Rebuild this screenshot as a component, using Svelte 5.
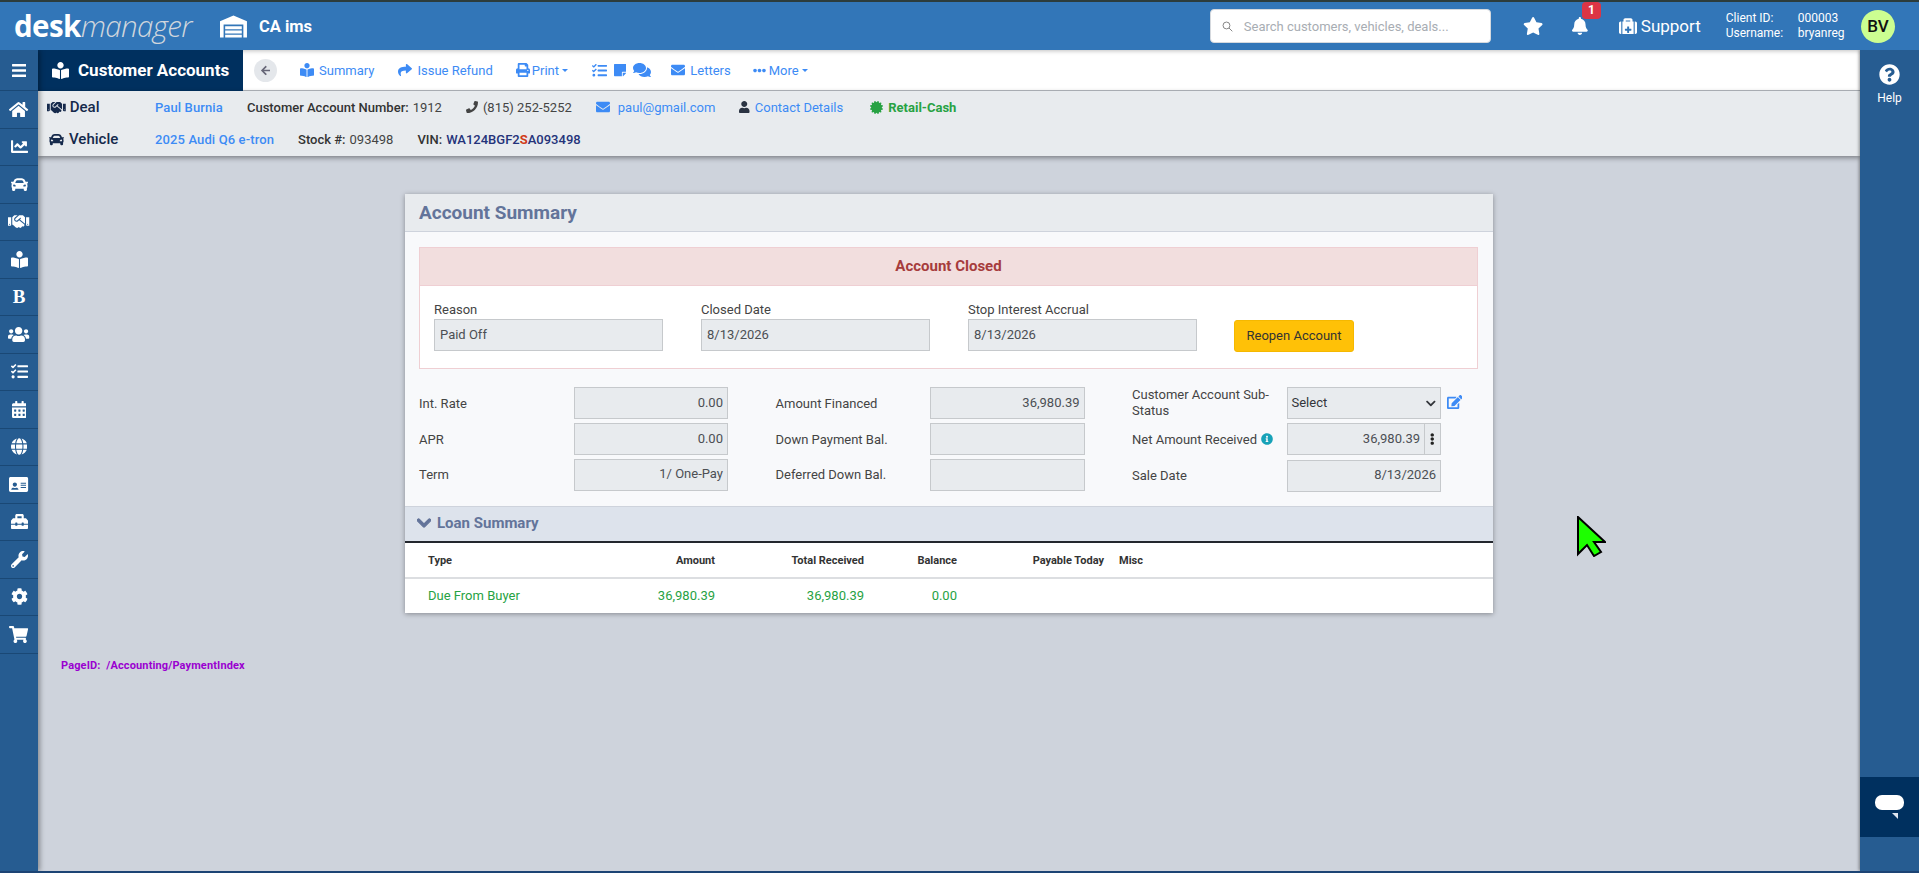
<script lang="ts">
  const icons: Record<string, [number, string]> = {
    bars: [448, "M16 132h416c8.837 0 16-7.163 16-16V76c0-8.837-7.163-16-16-16H16C7.163 60 0 67.163 0 76v40c0 8.837 7.163 16 16 16zm0 160h416c8.837 0 16-7.163 16-16v-40c0-8.837-7.163-16-16-16H16c-8.837 0-16 7.163-16 16v40c0 8.837 7.163 16 16 16zm0 160h416c8.837 0 16-7.163 16-16v-40c0-8.837-7.163-16-16-16H16c-8.837 0-16 7.163-16 16v40c0 8.837 7.163 16 16 16z"],
    star: [576, "M259.3 17.8L194 150.2 47.9 171.5c-26.2 3.8-36.7 36.1-17.7 54.6l105.7 103-25 145.5c-4.5 26.3 23.2 46 46.4 33.7L288 439.6l130.7 68.7c23.2 12.2 50.9-7.4 46.4-33.7l-25-145.5 105.7-103c19-18.5 8.5-50.8-17.7-54.6L382 150.2 316.7 17.8c-11.7-23.6-45.6-23.9-57.4 0z"],
    bell: [448, "M224 512c35.32 0 63.97-28.65 63.97-64H160.03c0 35.35 28.65 64 63.97 64zm215.39-149.71c-19.32-20.76-55.47-51.99-55.47-154.29 0-77.7-54.48-139.9-127.94-155.16V32c0-17.67-14.32-32-31.98-32s-31.98 14.33-31.98 32v20.84C118.56 68.1 64.08 130.3 64.08 208c0 102.3-36.15 133.53-55.47 154.29-6 6.45-8.66 14.16-8.61 21.71.11 16.4 12.98 32 32.1 32h383.8c19.12 0 32-15.6 32.1-32 .05-7.55-2.61-15.27-8.61-21.71z"],
    phone: [512, "M493.4 24.6l-104-24c-11.3-2.6-22.9 3.3-27.5 13.9l-48 112c-4.2 9.8-1.4 21.3 6.9 28l60.6 49.6c-36 76.7-98.9 140.5-177.2 177.2l-49.6-60.6c-6.8-8.3-18.2-11.1-28-6.9l-112 48C3.9 366.5-2 378.1.6 389.4l24 104C27.1 504.2 36.7 512 48 512c256.1 0 464-207.5 464-464 0-11.2-7.7-20.9-18.6-23.4z"],
    envelope: [512, "M502.3 190.8c3.9-3.1 9.7-.2 9.7 4.7V400c0 26.5-21.5 48-48 48H48c-26.5 0-48-21.5-48-48V195.6c0-5 5.7-7.8 9.7-4.7 22.4 17.4 52.1 39.5 154.1 113.6 21.1 15.4 56.7 47.8 92.2 47.6 35.7.3 72-32.8 92.3-47.6 102-74.1 131.6-96.3 154-113.7zM256 320c23.2.4 56.6-29.2 73.4-41.4 132.7-96.3 142.8-104.7 173.4-128.7 5.8-4.5 9.2-11.5 9.2-18.9v-19c0-26.5-21.5-48-48-48H48C21.5 64 0 85.5 0 112v19c0 7.4 3.4 14.3 9.2 18.9 30.6 23.9 40.7 32.4 173.4 128.7 16.8 12.2 50.2 41.8 73.4 41.4z"],
    user: [448, "M224 256c70.7 0 128-57.3 128-128S294.7 0 224 0 96 57.3 96 128s57.3 128 128 128zm89.6 32h-16.7c-22.2 10.2-46.9 16-72.9 16s-50.6-5.8-72.9-16h-16.7C60.2 288 0 348.2 0 422.4V464c0 26.5 21.5 48 48 48h352c26.5 0 48-21.5 48-48v-41.6c0-74.2-60.2-134.4-134.4-134.4z"],
    share: [512, "M503.691 189.836L327.687 37.851C312.281 24.546 288 35.347 288 56.015v80.053C127.371 137.907 0 170.1 0 322.326c0 61.441 39.581 122.309 83.333 154.132 13.653 9.931 33.111-2.533 28.077-18.631C66.066 312.814 132.917 274.316 288 272.085V360c0 20.7 24.3 31.453 39.687 18.164l176.004-152c11.071-9.562 11.086-26.753 0-36.328z"],
    chevron: [448, "M207.029 381.476L12.686 187.132c-9.373-9.373-9.373-24.569 0-33.941l22.667-22.667c9.357-9.357 24.522-9.375 33.901-.04L224 284.505l154.745-154.021c9.379-9.335 24.544-9.317 33.901.04l22.667 22.667c9.373 9.373 9.373 24.569 0 33.941L240.971 381.476c-9.373 9.372-24.569 9.372-33.942 0z"],
    question: [512, "M504 256c0 136.997-111.043 248-248 248S8 392.997 8 256C8 119.083 119.043 8 256 8s248 111.083 248 248zM262.655 90c-54.497 0-89.255 22.957-116.549 63.758-3.536 5.286-2.353 12.415 2.715 16.258l34.699 26.31c5.205 3.947 12.621 3.008 16.665-2.122 17.864-22.658 30.113-35.797 57.303-35.797 20.429 0 45.698 13.148 45.698 32.958 0 14.976-12.363 22.667-32.534 33.976C247.128 238.528 216 254.941 216 296v4c0 6.627 5.373 12 12 12h56c6.627 0 12-5.373 12-12v-1.333c0-28.462 83.186-29.647 83.186-106.667 0-58.002-60.165-102-116.531-102zM256 338c-25.365 0-46 20.635-46 46 0 25.364 20.635 46 46 46s46-20.636 46-46c0-25.365-20.635-46-46-46z"],
    info: [512, "M256 8C119.043 8 8 119.083 8 256c0 136.997 111.043 248 248 248s248-111.003 248-248C504 119.083 392.957 8 256 8zm0 110c23.196 0 42 18.804 42 42s-18.804 42-42 42-42-18.804-42-42 18.804-42 42-42zm56 254c0 6.627-5.373 12-12 12h-88c-6.627 0-12-5.373-12-12v-24c0-6.627 5.373-12 12-12h12v-64h-12c-6.627 0-12-5.373-12-12v-24c0-6.627 5.373-12 12-12h64c6.627 0 12 5.373 12 12v100h12c6.627 0 12 5.373 12 12v24z"],
    cart: [576, "M528.12 301.319l47.273-208C578.806 78.301 567.391 64 551.99 64H159.208l-9.166-44.81C147.758 8.021 137.93 0 126.529 0H24C10.745 0 0 10.745 0 24v16c0 13.255 10.745 24 24 24h69.883l70.248 343.435C147.325 417.1 136 435.222 136 456c0 30.928 25.072 56 56 56s56-25.072 56-56c0-15.674-6.447-29.835-16.824-40h209.647C430.447 426.165 424 440.326 424 456c0 30.928 25.072 56 56 56s56-25.072 56-56c0-22.172-12.888-41.332-31.579-50.405l5.517-24.276c3.413-15.018-8.002-29.319-23.403-29.319H218.117l-6.545-32h293.145c11.206 0 20.92-7.754 23.403-18.681z"],
    wrench: [512, "M507.73 109.1c-2.24-9.03-13.54-12.09-20.12-5.51l-74.36 74.36-67.88-11.31-11.31-67.88 74.36-74.36c6.62-6.62 3.43-17.9-5.66-20.16-47.38-11.74-99.55.91-136.58 37.93-39.64 39.64-50.55 97.1-34.05 147.2L18.74 402.76c-24.99 24.99-24.99 65.51 0 90.5 24.99 24.99 65.51 24.99 90.5 0l213.21-213.21c50.12 16.71 107.47 5.68 147.37-34.22 37.07-37.07 49.7-89.32 37.91-136.73zM64 472c-13.25 0-24-10.75-24-24 0-13.26 10.75-24 24-24s24 10.74 24 24c0 13.25-10.75 24-24 24z"],
    cog: [512, "M487.4 315.7l-42.6-24.6c4.3-23.2 4.3-47 0-70.2l42.6-24.6c4.9-2.8 7.1-8.6 5.5-14-11.1-35.6-30-67.8-54.7-94.6-3.8-4.1-10-5.1-14.8-2.3L380.8 110c-17.9-15.4-38.5-27.3-60.8-35.1V25.8c0-5.6-3.9-10.5-9.4-11.7-36.7-8.2-74.3-7.8-109.2 0-5.5 1.2-9.4 6.1-9.4 11.7V75c-22.2 7.9-42.8 19.8-60.8 35.1L88.7 85.5c-4.9-2.8-11-1.9-14.8 2.3-24.7 26.7-43.6 58.9-54.7 94.6-1.7 5.4.6 11.2 5.5 14L67.3 221c-4.3 23.2-4.3 47 0 70.2l-42.6 24.6c-4.9 2.8-7.1 8.6-5.5 14 11.1 35.6 30 67.8 54.7 94.6 3.8 4.1 10 5.1 14.8 2.3l42.6-24.6c17.9 15.4 38.5 27.3 60.8 35.1v49.2c0 5.6 3.9 10.5 9.4 11.7 36.7 8.2 74.3 7.8 109.2 0 5.5-1.2 9.4-6.1 9.4-11.7v-49.2c22.2-7.9 42.8-19.8 60.8-35.1l42.6 24.6c4.9 2.8 11 1.9 14.8-2.3 24.7-26.7 43.6-58.9 54.7-94.6 1.5-5.5-.7-11.3-5.6-14.1zM256 336c-44.1 0-80-35.9-80-80s35.9-80 80-80 80 35.9 80 80-35.9 80-80 80z"],
    car: [512, "M499.99 176h-59.87l-16.64-41.6C406.38 91.63 365.57 64 319.5 64h-127c-46.06 0-86.88 27.63-103.99 70.4L71.87 176H12.01C4.2 176-1.53 183.34.37 190.91l6 24C7.7 220.25 12.5 224 18.01 224h20.07C24.65 235.73 16 252.78 16 272v48c0 16.12 6.16 30.67 16 41.93V416c0 17.67 14.33 32 32 32h32c17.67 0 32-14.33 32-32v-32h256v32c0 17.67 14.33 32 32 32h32c17.67 0 32-14.33 32-32v-54.07c9.84-11.25 16-25.8 16-41.93v-48c0-19.22-8.65-36.27-22.07-48H494c5.51 0 10.31-3.75 11.64-9.09l6-24c1.89-7.57-3.84-14.91-11.65-14.91zm-352.06-17.83c7.29-18.22 24.94-30.17 44.57-30.17h127c19.63 0 37.28 11.95 44.57 30.17L384 208H128l19.93-49.83zM96 319.8c-19.2 0-32-12.76-32-31.9S76.8 256 96 256s48 28.71 48 47.85-28.8 15.95-48 15.95zm320 0c-19.2 0-48 3.19-48-15.95S396.8 256 416 256s32 12.76 32 31.9-12.8 31.9-32 31.9z"],
    home: [576, "M280.37 148.26L96 300.11V464a16 16 0 0 0 16 16l112.06-.29a16 16 0 0 0 15.92-16V368a16 16 0 0 1 16-16h64a16 16 0 0 1 16 16v95.64a16 16 0 0 0 16 16.05L464 480a16 16 0 0 0 16-16V300L295.67 148.26a12.19 12.19 0 0 0-15.3 0zM571.6 251.47L488 182.56V44.05a12 12 0 0 0-12-12h-56a12 12 0 0 0-12 12v72.61L318.47 43a48 48 0 0 0-61 0L4.34 251.47a12 12 0 0 0-1.6 16.9l25.5 31A12 12 0 0 0 45.15 301l235.22-193.74a12.19 12.19 0 0 1 15.3 0L530.9 301a12 12 0 0 0 16.9-1.6l25.5-31a12 12 0 0 0-1.7-16.93z"],
    chart: [512, "M496 384H64V80c0-8.84-7.16-16-16-16H16C7.16 64 0 71.16 0 80v336c0 17.67 14.33 32 32 32h464c8.84 0 16-7.16 16-16v-32c0-8.84-7.16-16-16-16zM464 96H345.94c-21.38 0-32.09 25.85-16.97 40.97l32.4 32.4L288 242.75l-73.37-73.37c-12.5-12.5-32.76-12.5-45.25 0l-68.69 68.69c-6.25 6.25-6.25 16.38 0 22.63l22.62 22.62c6.25 6.25 16.38 6.25 22.63 0L192 237.25l73.37 73.37c12.5 12.5 32.76 12.5 45.25 0l96-96 32.4 32.4c15.12 15.12 40.97 4.41 40.97-16.97V112c.01-8.84-7.15-16-16-16z"],
    users: [640, "M96 224c35.3 0 64-28.7 64-64s-28.7-64-64-64-64 28.7-64 64 28.7 64 64 64zm448 0c35.3 0 64-28.7 64-64s-28.7-64-64-64-64 28.7-64 64 28.7 64 64 64zm32 32h-64c-17.6 0-33.5 7.1-45.1 18.6 40.3 22.1 68.9 62 75.1 109.4h66c17.7 0 32-14.3 32-32v-32c0-35.3-28.7-64-64-64zm-256 0c61.9 0 112-50.1 112-112S381.9 32 320 32 208 82.1 208 144s50.1 112 112 112zm76.8 32h-8.3c-20.8 10-43.9 16-68.5 16s-47.6-6-68.5-16h-8.3C179.6 288 128 339.6 128 403.2V432c0 26.5 21.5 48 48 48h288c26.5 0 48-21.5 48-48v-28.8c0-63.6-51.6-115.2-115.2-115.2zm-223.7-13.4C161.5 263.1 145.6 256 128 256H64c-35.3 0-64 28.7-64 64v32c0 17.7 14.3 32 32 32h65.9c6.3-47.4 34.9-87.3 75.2-109.4z"],
    calendar: [448, "M0 464c0 26.5 21.5 48 48 48h352c26.5 0 48-21.5 48-48V192H0v272zm320-196c0-6.6 5.4-12 12-12h40c6.6 0 12 5.4 12 12v40c0 6.6-5.4 12-12 12h-40c-6.6 0-12-5.4-12-12v-40zm0 128c0-6.6 5.4-12 12-12h40c6.6 0 12 5.4 12 12v40c0 6.6-5.4 12-12 12h-40c-6.6 0-12-5.4-12-12v-40zM192 268c0-6.6 5.4-12 12-12h40c6.6 0 12 5.4 12 12v40c0 6.6-5.4 12-12 12h-40c-6.6 0-12-5.4-12-12v-40zm0 128c0-6.6 5.4-12 12-12h40c6.6 0 12 5.4 12 12v40c0 6.6-5.4 12-12 12h-40c-6.6 0-12-5.4-12-12v-40zM64 268c0-6.6 5.4-12 12-12h40c6.6 0 12 5.4 12 12v40c0 6.6-5.4 12-12 12H76c-6.6 0-12-5.4-12-12v-40zm0 128c0-6.6 5.4-12 12-12h40c6.6 0 12 5.4 12 12v40c0 6.6-5.4 12-12 12H76c-6.6 0-12-5.4-12-12v-40zM400 64h-48V16c0-8.8-7.2-16-16-16h-32c-8.8 0-16 7.2-16 16v48H160V16c0-8.8-7.2-16-16-16h-32c-8.8 0-16 7.2-16 16v48H48C21.5 64 0 85.5 0 112v48h448v-48c0-26.5-21.5-48-48-48z"],
    print: [512, "M448 192V77.25c0-8.49-3.37-16.62-9.37-22.63L393.37 9.37c-6-6-14.14-9.37-22.63-9.37H96C78.33 0 64 14.33 64 32v160c-35.35 0-64 28.65-64 64v112c0 8.84 7.16 16 16 16h48v96c0 17.67 14.33 32 32 32h320c17.67 0 32-14.33 32-32v-96h48c8.84 0 16-7.16 16-16V256c0-35.35-28.65-64-64-64zm-64 256H128v-96h256v96zm0-224H128V64h192v48c0 8.84 7.16 16 16 16h48v96zm48 72c-13.25 0-24-10.75-24-24 0-13.26 10.75-24 24-24s24 10.74 24 24c0 13.25-10.75 24-24 24z"],
    edit: [576, "M402.6 83.2l90.2 90.2c3.8 3.8 3.8 10 0 13.8L274.4 405.6l-92.8 10.3c-12.4 1.4-22.9-9.1-21.5-21.5l10.3-92.8L388.8 83.2c3.8-3.8 10-3.8 13.8 0zm162-22.9l-48.8-48.8c-15.2-15.2-39.9-15.2-55.2 0l-35.4 35.4c-3.8 3.8-3.8 10 0 13.8l90.2 90.2c3.8 3.8 10 3.8 13.8 0l35.4-35.4c15.2-15.3 15.2-40 0-55.2zM384 346.2V448H64V128h229.8c3.2 0 6.2-1.3 8.5-3.5l40-40c7.6-7.6 2.2-20.5-8.5-20.5H48C21.5 64 0 85.5 0 112v352c0 26.5 21.5 48 48 48h352c26.5 0 48-21.5 48-48V306.2c0-10.7-12.9-16-20.5-8.5l-40 40c-2.2 2.3-3.5 5.3-3.5 8.5z"],
    tasks: [512, "M139.61 35.5a12 12 0 0 0-17 0L58.93 98.81l-22.7-22.12a12 12 0 0 0-17 0L3.53 92.41a12 12 0 0 0 0 17l47.59 47.4a12.78 12.78 0 0 0 17.61 0l15.59-15.62L156.52 69a12.09 12.09 0 0 0 .09-17zm0 159.19a12 12 0 0 0-17 0l-63.68 63.72-22.7-22.1a12 12 0 0 0-17 0L3.53 252a12 12 0 0 0 0 17L51 316.5a12.77 12.77 0 0 0 17.6 0l15.7-15.69 72.2-72.22a12 12 0 0 0 .09-16.9zM64 368c-26.49 0-48.59 21.5-48.59 48S37.53 464 64 464a48 48 0 0 0 0-96zm432 16H208a16 16 0 0 0-16 16v32a16 16 0 0 0 16 16h288a16 16 0 0 0 16-16v-32a16 16 0 0 0-16-16zm0-320H208a16 16 0 0 0-16 16v32a16 16 0 0 0 16 16h288a16 16 0 0 0 16-16V80a16 16 0 0 0-16-16zm0 160H208a16 16 0 0 0-16 16v32a16 16 0 0 0 16 16h288a16 16 0 0 0 16-16v-32a16 16 0 0 0-16-16z"],
    note: [448, "M312 320h136V56c0-13.3-10.7-24-24-24H24C10.7 32 0 42.7 0 56v400c0 13.3 10.7 24 24 24h264V344c0-13.2 10.8-24 24-24zm129 55l-98 98c-4.5 4.5-10.6 7-17 7h-6V352h128v6.1c0 6.3-2.5 12.4-7 16.9z"],
    comments: [576, "M416 192c0-88.4-93.1-160-208-160S0 103.6 0 192c0 34.3 14.1 65.9 38 92-13.4 30.2-35.5 54.2-35.8 54.5-2.2 2.3-2.8 5.7-1.5 8.7S4.8 352 8 352c36.6 0 66.9-12.3 88.7-25 32.2 15.7 70.3 25 111.3 25 114.9 0 208-71.6 208-160zm122 220c23.9-26 38-57.7 38-92 0-66.9-53.5-124.2-129.3-148.1.9 6.6 1.3 13.3 1.3 20.1 0 105.9-107.7 192-240 192-10.8 0-21.3-.8-31.7-1.9C207.8 439.6 281.8 480 368 480c41 0 79.1-9.2 111.3-25 21.8 12.7 52.1 25 88.7 25 3.2 0 6.1-1.9 7.3-4.8 1.3-2.9.7-6.3-1.5-8.7-.3-.3-22.4-24.2-35.8-54.5z"],
    reader: [512, "M352 96c0-53.02-42.98-96-96-96s-96 42.98-96 96 42.98 96 96 96 96-42.98 96-96zM233.59 241.1c-59.33-36.32-155.43-46.3-203.79-49.05C13.55 191.13 0 203.51 0 219.14v222.8c0 14.33 11.59 26.28 26.49 27.05 43.66 2.29 131.99 10.68 193.04 41.43 9.37 4.72 20.48-1.71 20.48-11.87V252.56c-.01-4.67-2.32-8.95-6.42-11.46zm248.61-49.05c-48.35 2.74-144.46 12.73-203.78 49.05-4.1 2.51-6.41 6.96-6.41 11.63v245.79c0 10.19 11.14 16.63 20.54 11.9 61.04-30.72 149.32-39.11 192.97-41.4 14.9-.78 26.49-12.73 26.49-27.06V219.14c-.01-15.63-13.56-28.01-29.81-27.09z"],
    medkit: [512, "M96 480h320V128h-32V80c0-26.51-21.49-48-48-48H176c-26.51 0-48 21.49-48 48v48H96v352zm96-384h128v32H192V96zm160 248v32c0 6.627-5.373 12-12 12h-52v52c0 6.627-5.373 12-12 12h-32c-6.627 0-12-5.373-12-12v-52h-52c-6.627 0-12-5.373-12-12v-32c0-6.627 5.373-12 12-12h52v-52c0-6.627 5.373-12 12-12h32c6.627 0 12 5.373 12 12v52h52c6.627 0 12 5.373 12 12zM512 176v256c0 26.51-21.49 48-48 48h-16V128h16c26.51 0 48 21.49 48 48zM64 480H48c-26.51 0-48-21.49-48-48V176c0-26.51 21.49-48 48-48h16v352z"],
    warehouse: [600, "M0 500V140L300 10l300 130v360h-80V210H80v290zM115 250h370v65H115zm0 95h370v65H115zm0 95h370v60H115z"],
    idcard: [576, "M528 32H48C21.5 32 0 53.5 0 80v352c0 26.5 21.5 48 48 48h480c26.5 0 48-21.5 48-48V80c0-26.5-21.5-48-48-48zM176 192c35.3 0 64 28.7 64 64s-28.7 64-64 64-64-28.7-64-64 28.7-64 64-64zm-108.900 204.200C75.500 370.500 99.600 352 128 352h8.200c12.300 5.100 25.700 8 39.800 8s27.600-2.900 39.800-8h8.200c28.400 0 52.500 18.500 60.900 44.200 3.200 9.900-5.200 19.800-15.600 19.800H82.700c-10.400 0-18.800-10-15.600-19.800zM352 200h160v32H352zm0 64h160v32H352zm0 64h160v32H352z"],
    toolbox: [512, "M502.63 214.63l-45.25-45.25c-6-6-14.14-9.37-22.63-9.37H384V80c0-26.51-21.49-48-48-48H176c-26.51 0-48 21.49-48 48v80H77.25c-8.49 0-16.62 3.37-22.63 9.37L9.37 214.63c-6 6-9.37 14.14-9.37 22.63V320h128v-16c0-8.84 7.16-16 16-16h32c8.84 0 16 7.16 16 16v16h128v-16c0-8.84 7.16-16 16-16h32c8.84 0 16 7.16 16 16v16h128v-82.75c0-8.48-3.37-16.62-9.37-22.62zM320 160H192V96h128v64zm64 208c0 8.84-7.16 16-16 16h-32c-8.84 0-16-7.16-16-16v-16H192v16c0 8.84-7.16 16-16 16h-32c-8.84 0-16-7.16-16-16v-16H0v96c0 17.67 14.33 32 32 32h448c17.67 0 32-14.33 32-32v-96H384v16z"],
    globe: [496, "M336.5 160C322 70.7 287.8 8 248 8s-74 62.7-88.5 152h177zM152 256c0 22.2 1.2 43.5 3.3 64h185.3c2.1-20.5 3.3-41.8 3.3-64s-1.2-43.5-3.3-64H155.3c-2.1 20.5-3.3 41.8-3.3 64zm324.7-96c-28.6-67.9-86.5-120.4-158-141.6 24.4 33.8 41.2 84.7 50 141.6h108zM177.2 18.4C105.8 39.6 47.8 92.1 19.3 160h108c8.7-56.9 25.5-107.8 49.9-141.6zM487.4 192H372.7c2.1 21 3.3 42.5 3.3 64s-1.2 43-3.3 64h114.6c5.5-20.5 8.6-41.8 8.6-64s-3.1-43.5-8.5-64zM120 256c0-21.5 1.2-43 3.3-64H8.6C3.2 212.5 0 233.8 0 256s3.2 43.5 8.6 64h114.6c-2-21-3.2-42.5-3.2-64zm39.5 96c14.5 89.3 48.7 152 88.5 152s74-62.7 88.5-152h-177zm159.3 141.6c71.4-21.2 129.4-73.7 158-141.6h-108c-8.8 56.9-25.6 107.8-50 141.6zM19.3 352c28.6 67.9 86.5 120.4 158 141.6-24.4-33.8-41.2-84.700-50-141.6h-108z"],
    handshake: [640, "M434.7 64h-85.9c-8 0-15.7 3-21.6 8.4l-98.3 90c-.1.1-.2.3-.3.4-16.6 15.6-16.3 40.5-2.1 56 12.7 13.9 39.4 17.6 56.1 2.7.1-.1.3-.1.4-.2l79.9-73.2c6.5-5.9 16.7-5.5 22.6 1 6 6.5 5.5 16.6-1 22.6l-26.1 23.9L504 313.8c2.9 2.4 5.5 5 7.9 7.7V128l-54.6-54.6c-5.9-6-14.1-9.4-22.6-9.4zM544 128.2v223.9c0 17.7 14.3 32 32 32h64V128.2h-96zm48 223.9c-8.8 0-16-7.2-16-16s7.2-16 16-16 16 7.2 16 16-7.2 16-16 16zM0 384h64c17.7 0 32-14.3 32-32V128.2H0V384zm48-63.9c8.8 0 16 7.2 16 16s-7.2 16-16 16-16-7.2-16-16c0-8.9 7.2-16 16-16zm435.9 18.6L334.6 217.5l-30 27.5c-29.7 27.1-75.2 24.5-101.7-4.4-26.9-29.4-24.8-74.9 4.4-101.7L289.1 64h-83.8c-8.5 0-16.6 3.4-22.6 9.4L128 128v223.9h18.3l90.5 81.9c27.4 22.3 67.7 18.1 90-9.3l.2-.2 17.9 15.5c15.9 13 39.4 10.5 52.3-5.4l31.4-38.6 5.4 4.4c13.7 11.1 33.9 9.1 45-4.7l9.5-11.7c11.2-13.8 9.1-33.9-4.6-45.1z"],
    certificate: [512, "M458.622 255.92l45.985-45.005c13.708-12.977 7.316-36.039-10.664-40.339l-62.65-15.99 17.661-62.015c4.991-17.838-11.829-34.663-29.661-29.671l-61.994 17.667-15.984-62.671C337.085.197 313.765-6.276 300.99 7.228L256 53.57 211.011 7.229c-12.63-13.351-36.047-7.234-40.325 10.668l-15.984 62.671-61.995-17.667C74.87 57.907 58.056 74.738 63.046 92.572l17.661 62.015-62.65 15.99C.069 174.878-6.31 197.944 7.392 210.915l45.985 45.005-45.985 45.004c-13.708 12.977-7.316 36.039 10.664 40.339l62.65 15.99-17.661 62.015c-4.991 17.838 11.829 34.663 29.661 29.671l61.994-17.667 15.984 62.671c4.439 18.575 27.696 24.018 40.325 10.668L256 458.61l44.989 46.001c12.5 13.488 35.987 7.486 40.325-10.668l15.984-62.671 61.994 17.667c17.836 4.994 34.651-11.837 29.661-29.671l-17.661-62.015 62.65-15.99c17.987-4.302 24.366-27.367 10.664-40.339l-45.984-45.004z"],
    dots: [512, "M328 256c0 39.8-32.200 72-72 72s-72-32.200-72-72 32.200-72 72-72 72 32.200 72 72zm104-72c-39.800 0-72 32.200-72 72s32.200 72 72 72 72-32.200 72-72-32.200-72-72-72zm-352 0c-39.800 0-72 32.200-72 72s32.200 72 72 72 72-32.200 72-72-32.200-72-72-72z"],
    kebab: [192, "M96 184c39.800 0 72 32.200 72 72s-32.200 72-72 72-72-32.200-72-72 32.200-72 72-72zM24 80c0 39.800 32.200 72 72 72s72-32.200 72-72S135.800 8 96 8 24 40.200 24 80zm0 352c0 39.800 32.200 72 72 72s72-32.200 72-72-32.200-72-72-72-72 32.200-72 72z"],
    back: [448, "M257.500 445.100l-22.200 22.200c-9.400 9.400-24.600 9.400-33.900 0L7 273c-9.400-9.400-9.400-24.600 0-33.900L201.400 44.700c9.400-9.400 24.600-9.400 33.900 0l22.200 22.200c9.500 9.500 9.300 25-.4 34.300L136.600 216H424c13.300 0 24 10.700 24 24v32c0 13.300-10.700 24-24 24H136.600l120.500 114.800c9.800 9.300 10 24.800.4 34.300z"]
  };

  const sideItems = ["home", "chart", "car", "handshake", "reader", "B", "users", "tasks", "calendar", "globe", "idcard", "toolbox", "wrench", "cog", "cart"];

  const summary = [
    [
      { label: "Int. Rate", value: "0.00" },
      { label: "APR", value: "0.00" },
      { label: "Term", value: "1/ One-Pay" }
    ],
    [
      { label: "Amount Financed", value: "36,980.39" },
      { label: "Down Payment Bal.", value: "" },
      { label: "Deferred Down Bal.", value: "" }
    ]
  ];
</script>

{#snippet ic(name: string, cls: string)}
  <svg class="ic {cls}" viewBox="0 0 {icons[name][0]} 512" fill="currentColor" aria-hidden="true"><path d={icons[name][1]} /></svg>
{/snippet}

<div class="app">
  <header class="topbar">
    <div class="logo"><b>desk</b><i>manager</i></div>
    {@render ic("warehouse", "wh")}
    <span class="dealer">CA ims</span>

    <div class="search">
      <svg class="search-ic" viewBox="0 0 16 16" fill="none" stroke="currentColor" stroke-width="1.3"><circle cx="6.5" cy="6.5" r="5" /><path d="M10.2 10.2L15 15" /></svg>
      <span>Search customers, vehicles, deals...</span>
    </div>
    {@render ic("star", "star")}
    <div class="bell">
      {@render ic("bell", "bell-ic")}
      <span class="badge">1</span>
    </div>
    <div class="support">{@render ic("medkit", "med")}<span>Support</span></div>
    <div class="client">
      <span>Client ID:</span><span>000003</span>
      <span>Username:</span><span>bryanreg</span>
    </div>
    <div class="avatar">BV</div>
  </header>

  <div class="below">
    <nav class="side">
      <div class="side-item first">{@render ic("bars", "s18")}</div>
      {#each sideItems as item}
        <div class="side-item">
          {#if item === "B"}
            <span class="b-ic">B</span>
          {:else}
            {@render ic(item, "s18")}
          {/if}
        </div>
      {/each}
    </nav>

    <main class="main">
      <div class="subnav">
        <div class="module">{@render ic("reader", "s18")}<span>Customer Accounts</span></div>
        <div class="back">{@render ic("back", "s11")}</div>
        <div class="links">
          <a>{@render ic("reader", "s14")}Summary</a>
          <a>{@render ic("share", "s14")}Issue Refund</a>
          <a class="tight">{@render ic("print", "s14")}Print<em class="caret"></em></a>
          <a class="multi">{@render ic("tasks", "s15")}{@render ic("note", "s14")}{@render ic("comments", "s16")}</a>
          <a class="letters">{@render ic("envelope", "s14")}Letters</a>
          <a class="more">{@render ic("dots", "s13")}More<em class="caret"></em></a>
        </div>
      </div>

      <div class="dealbar">
        <div class="dealrow">
          <div class="dl">{@render ic("handshake", "s15")}<span>Deal</span></div>
          <span class="lnk med">Paul Burnia</span>
          <span class="txt"><b>Customer Account Number:</b> 1912</span>
          <span class="txt">{@render ic("phone", "s12")}(815) 252-5252</span>
          <span class="lnk">{@render ic("envelope", "s14 sp")}paul@gmail.com</span>
          <span class="lnk">{@render ic("user", "s12 dark")}Contact Details</span>
          <span class="green">{@render ic("certificate", "s13")}Retail-Cash</span>
        </div>
        <div class="dealrow">
          <div class="dl veh">{@render ic("car", "s15")}<span>Vehicle</span></div>
          <span class="lnk med">2025 Audi Q6 e-tron</span>
          <span class="txt"><b>Stock #:</b> 093498</span>
          <span class="txt"><b>VIN:</b> <span class="vin">WA124BGF2<span class="red">S</span>A093498</span></span>
        </div>
      </div>

      <div class="content">
        <section class="card">
          <h2 class="card-head">Account Summary</h2>
          <div class="card-body">
            <div class="closed">
              <div class="closed-head">Account Closed</div>
              <div class="closed-body">
                <div class="cf"><label>Reason</label><div class="ro">Paid Off</div></div>
                <div class="cf"><label>Closed Date</label><div class="ro">8/13/2026</div></div>
                <div class="cf"><label>Stop Interest Accrual</label><div class="ro">8/13/2026</div></div>
                <button class="reopen">Reopen Account</button>
              </div>
            </div>

            <div class="fields">
              {#each summary as col}
                <div class="fcol">
                  {#each col as row}
                    <span class="fl">{row.label}</span>
                    <div class="ro right">{row.value}</div>
                  {/each}
                </div>
              {/each}
              <div class="fcol">
                <span class="fl two">Customer Account Sub-Status</span>
                <div class="ctl">
                  <div class="ro sel"><span>Select</span>{@render ic("chevron", "s11")}</div>
                  {@render ic("edit", "s14 blue")}
                </div>
                <span class="fl">Net Amount Received {@render ic("info", "s12 teal")}</span>
                <div class="ro right split"><span class="val">36,980.39</span><span class="kb">{@render ic("kebab", "s12")}</span></div>
                <span class="fl low">Sale Date</span>
                <div class="ro right low">8/13/2026</div>
              </div>
            </div>
          </div>

          <div class="loan-head">{@render ic("chevron", "s16")}<span>Loan Summary</span></div>
          <div class="tbl th">
            <span>Type</span><span class="r">Amount</span><span class="r">Total Received</span><span class="r">Balance</span><span class="r">Payable Today</span><span>Misc</span>
          </div>
          <div class="tbl tr">
            <span>Due From Buyer</span><span class="r">36,980.39</span><span class="r">36,980.39</span><span class="r">0.00</span><span class="r"></span><span></span>
          </div>
        </section>
        <div class="pageid">PageID:&nbsp; /Accounting/PaymentIndex</div>
      </div>
    </main>

    <aside class="rail">
      <div class="help">{@render ic("question", "s21")}<span>Help</span></div>
      <div class="chat">
        <svg viewBox="0 0 30 24" fill="#fff" class="chat-ic"><rect x="0" y="0" width="29" height="15" rx="7" /><path d="M17 18l6 0v6z" fill="#dfe6f0" /></svg>
      </div>
    </aside>
  </div>

  <svg class="cursor" viewBox="0 0 29 41"><path d="M1 1v37l9-9 7 11 7-4-7-10h11z" fill="#1dff00" stroke="#000" stroke-width="2" /></svg>
</div>

<style>
  :global(body) {
    margin: 0;
    background: #ced3dc;
  }

  .app {
    position: relative;
    height: 873px;
    overflow: hidden;
    display: flex;
    flex-direction: column;
    font-family: Roboto, "Liberation Sans", sans-serif;
    font-size: 13px;
    color: #444;
    border-bottom: 2px solid #1c4474;
    box-sizing: border-box;
  }

  .ic {
    display: block;
    flex-shrink: 0;
    height: 14px;
  }
  .s11 { height: 11px; }
  .s12 { height: 12px; }
  .s13 { height: 13px; }
  .s14 { height: 14px; }
  .s15 { height: 15px; }
  .s16 { height: 16px; }
  .s18 { height: 17px; }
  .s21 { height: 21px; }

  .topbar {
    height: 48px;
    flex-shrink: 0;
    border-top: 2px solid #2c3c3c;
    background: #3276b8;
    display: flex;
    align-items: center;
    color: #fff;
    position: relative;
    z-index: 3;
  }

  .logo {
    margin-left: 14px;
    width: 190px;
    font-family: "Open Sans", sans-serif;
    font-size: 29.5px;
    letter-spacing: -0.6px;
    line-height: 1;
    white-space: nowrap;
  }
  .logo b {
    font-weight: 700;
  }
  .logo i {
    font-weight: 300;
    color: #d0d6dd;
  }

  .wh {
    height: 23px;
    margin-left: 16px;
  }

  .dealer {
    margin-left: 12px;
    font-size: 16.5px;
    font-weight: 700;
  }

  .search {
    margin-left: auto;
    width: 281px;
    height: 34px;
    box-sizing: border-box;
    background: #fff;
    border: 1px solid #d5d9de;
    border-radius: 4px;
    display: flex;
    align-items: center;
    color: #a8adb3;
    font-size: 13px;
  }
  .search-ic {
    width: 11px;
    height: 11px;
    margin: 0 11px 0 11px;
    color: #777;
  }

  .star {
    height: 18px;
    margin-left: 32px;
  }

  .bell {
    position: relative;
    margin-left: 29px;
    margin-right: 31px;
  }
  .bell-ic {
    height: 18px;
  }
  .badge {
    position: absolute;
    left: 10px;
    top: -15px;
    width: 19px;
    height: 17px;
    background: #dc3545;
    border-radius: 4px;
    font-size: 12px;
    font-weight: 700;
    text-align: center;
    line-height: 16px;
  }

  .support {
    display: flex;
    align-items: center;
    gap: 4px;
    font-size: 17px;
  }
  .med {
    height: 18px;
  }

  .client {
    margin-left: 25px;
    display: grid;
    grid-template-columns: 72px auto;
    font-size: 12px;
    line-height: 15px;
  }

  .avatar {
    margin: 0 24px 0 16.5px;
    width: 34px;
    height: 33px;
    border-radius: 50%;
    background: #ccfe91;
    color: #111;
    font-size: 17px;
    font-weight: 500;
    display: flex;
    align-items: center;
    justify-content: center;
  }

  .below {
    flex: 1;
    display: flex;
    min-height: 0;
  }

  .side {
    width: 38px;
    flex-shrink: 0;
    background: #265c91;
    color: #fff;
    box-shadow: 2px 0 5px rgba(0, 0, 0, 0.35);
    position: relative;
    z-index: 2;
  }
  .side-item {
    height: 37.5px;
    box-sizing: border-box;
    border-bottom: 1px solid #1a4875;
    display: flex;
    align-items: center;
    justify-content: center;
  }
  .side-item.first {
    height: 41px;
  }
  .b-ic {
    font-family: "Liberation Serif", serif;
    font-weight: 700;
    font-size: 19px;
  }

  .main {
    flex: 1;
    min-width: 0;
    display: flex;
    flex-direction: column;
  }

  .subnav {
    height: 41px;
    box-sizing: border-box;
    flex-shrink: 0;
    background: #fff;
    border-bottom: 1px solid #b4b9bf;
    display: flex;
    align-items: center;
    box-shadow: inset 0 4px 4px -3px rgba(0, 0, 0, 0.25);
  }
  .module {
    width: 205px;
    height: 41px;
    box-sizing: border-box;
    background: #00305f;
    color: #fff;
    display: flex;
    align-items: center;
    gap: 9px;
    padding-left: 14px;
    font-size: 17px;
    font-weight: 700;
    flex-shrink: 0;
    white-space: nowrap;
  }
  .back {
    width: 23px;
    height: 23px;
    margin-left: 11px;
    border-radius: 50%;
    background: #e4e7eb;
    color: #667;
    display: flex;
    align-items: center;
    justify-content: center;
  }
  .links {
    display: flex;
    align-items: center;
    gap: 24px;
    margin-left: 23px;
    color: #3d8bf5;
  }
  .links a {
    display: flex;
    align-items: center;
    gap: 5px;
  }
  .links a.tight {
    gap: 2px;
    margin-left: -1px;
  }
  .links a.tight .caret {
    margin-left: 1px;
  }
  .links a.multi {
    gap: 7px;
    margin-right: -4px;
  }
  .links a.letters {
    margin-right: -2px;
  }
  .links a.more {
    gap: 3px;
  }
  .links a.more .caret {
    margin-left: 0;
  }
  .caret {
    width: 0;
    height: 0;
    margin-left: -2px;
    border-left: 3px solid transparent;
    border-right: 3px solid transparent;
    border-top: 3px solid currentColor;
  }

  .dealbar {
    height: 65px;
    flex-shrink: 0;
    box-sizing: border-box;
    background: #e8ebee;
    box-shadow: 0 2px 5px rgba(0, 0, 0, 0.4);
    position: relative;
  }
  .dealrow {
    height: 32px;
    display: flex;
    align-items: center;
    gap: 24px;
    padding-left: 9px;
    white-space: nowrap;
  }
  .dl {
    width: 84px;
    display: flex;
    align-items: center;
    gap: 4px;
    font-size: 15px;
    font-weight: 500;
    color: #15294b;
  }
  .dl.veh {
    padding-left: 2px;
    width: 82px;
    gap: 5px;
  }
  .lnk, .txt, .green {
    display: flex;
    align-items: center;
    gap: 5px;
  }
  .txt b, .green {
    font-weight: 500;
  }
  .txt b {
    color: #333;
    margin-right: -1px;
  }
  .lnk {
    color: #3d8bf5;
  }
  .lnk.med {
    font-weight: 500;
    letter-spacing: 0.12px;
  }
  .sp {
    margin-right: 3px;
  }
  .dark {
    color: #2a3342;
  }
  .green {
    color: #27a243;
    font-weight: 700;
    margin-left: 3px;
  }
  .vin {
    color: #25337a;
    font-weight: 500;
  }
  .red {
    color: #d13b17;
    font-weight: 700;
  }

  .content {
    flex: 1;
    padding-top: 38px;
  }

  .card {
    width: 1088px;
    margin: 0 auto;
    background: #fff;
    box-shadow: 0 1px 5px rgba(0, 0, 0, 0.35);
  }
  .card-head {
    margin: 0;
    height: 38px;
    box-sizing: border-box;
    padding: 0 14px;
    background: #e8ebee;
    border-bottom: 1px solid #ced3dc;
    color: #63749a;
    font-size: 19px;
    font-weight: 700;
    line-height: 37px;
  }
  .card-body {
    height: 274px;
    box-sizing: border-box;
    padding: 15px 14px 0;
    background: #f8f9fb;
  }

  .closed {
    width: 1059px;
    height: 122px;
    box-sizing: border-box;
    border: 1px solid #efcfd3;
    background: #fff;
  }
  .closed-head {
    height: 38px;
    box-sizing: border-box;
    background: #f2dede;
    border-bottom: 1px solid #efcfd3;
    color: #a63c3c;
    font-size: 15px;
    font-weight: 700;
    text-align: center;
    line-height: 37px;
  }
  .closed-body {
    display: flex;
    align-items: flex-end;
    gap: 38px;
    padding: 16px 14px 0;
  }
  .cf {
    width: 229px;
  }
  .cf label {
    display: block;
    line-height: 15px;
    margin-bottom: 2px;
    color: #444;
  }
  .ro {
    height: 32px;
    box-sizing: border-box;
    background: #e8ebee;
    border: 1px solid #c6c9cc;
    padding: 0 4px;
    line-height: 30px;
    color: #4c4f54;
    font-size: 13px;
  }
  .cf .ro {
    padding-left: 5px;
  }
  .right {
    text-align: right;
  }
  .reopen {
    width: 120px;
    height: 32px;
    margin: 0 0 -1px -1px;
    background: #ffc107;
    border: 1px solid #f5b800;
    border-radius: 3px;
    font: inherit;
    color: #333;
    padding: 0 0 2px;
  }

  .fields {
    display: flex;
    gap: 48px;
    margin-top: 18px;
  }
  .fcol {
    display: grid;
    grid-template-columns: 155px 154px;
    grid-auto-rows: 32px;
    row-gap: 4px;
    align-items: center;
  }
  .fcol:nth-child(2) {
    grid-template-columns: 154.5px 154.5px;
    margin-left: -0.5px;
  }
  .fcol:nth-child(3) {
    grid-template-columns: 154.5px 154.5px;
    margin-left: -0.5px;
  }
  .fcol > .fl:nth-last-child(2) {
    padding-bottom: 2px;
  }
  .fcol > .ro:last-child {
    line-height: 28px;
  }
  .fl {
    display: flex;
    align-items: center;
    gap: 4px;
    color: #444;
  }
  .fl.two {
    display: block;
    line-height: 16px;
    width: 150px;
  }
  .low {
    position: relative;
    top: 1px;
  }
  .ctl {
    position: relative;
  }
  .ctl .blue {
    position: absolute;
    left: 160px;
    top: 8px;
  }
  .blue {
    color: #3d8bf5;
  }
  .teal {
    color: #17a2b8;
  }
  .sel {
    display: flex;
    align-items: center;
    justify-content: space-between;
    color: #33363b;
  }
  .split {
    display: flex;
    padding: 0;
  }
  .val {
    flex: 1;
    padding-right: 4px;
  }
  .kb {
    width: 15px;
    border-left: 1px solid #c6c9cc;
    display: flex;
    align-items: center;
    justify-content: center;
    color: #222;
  }

  .loan-head {
    height: 35px;
    box-sizing: border-box;
    padding: 0 0 2px 12px;
    background: #dde3ec;
    border-top: 1px solid #ced3dc;
    display: flex;
    align-items: center;
    gap: 6px;
    color: #63749a;
    font-size: 15px;
    font-weight: 700;
  }
  .loan-head svg {
    stroke: currentColor;
    stroke-width: 40;
  }

  .tbl {
    display: grid;
    grid-template-columns: 172px 115px 149px 93px 147px 1fr;
    align-items: center;
    padding-left: 23px;
  }
  .tbl > span:last-child {
    margin-left: 15px;
  }
  .r {
    text-align: right;
  }
  .th {
    height: 38px;
    box-sizing: border-box;
    border-top: 2px solid #23272e;
    border-bottom: 2px solid #dcdee1;
    font-size: 11px;
    font-weight: 700;
    color: #333;
  }
  .tr {
    height: 34px;
    padding-bottom: 2px;
    box-sizing: border-box;
    color: #27a243;
  }

  .pageid {
    margin: 46px 0 0 23px;
    font-size: 11px;
    font-weight: 700;
    letter-spacing: 0.13px;
    color: #9a00d0;
  }

  .rail {
    width: 59px;
    flex-shrink: 0;
    background: #265c91;
    color: #fff;
    display: flex;
    flex-direction: column;
    box-shadow: -1px 0 3px rgba(0, 0, 0, 0.4);
    position: relative;
    z-index: 2;
  }
  .help {
    height: 727px;
    box-sizing: border-box;
    padding-top: 14px;
    display: flex;
    flex-direction: column;
    align-items: center;
    gap: 6px;
    font-size: 12px;
  }
  .chat {
    height: 60px;
    background: #00305f;
    display: flex;
    align-items: center;
    justify-content: center;
  }
  .chat-ic {
    width: 30px;
    height: 24px;
  }

  .cursor {
    position: absolute;
    left: 1577px;
    top: 516px;
    width: 29px;
    height: 41px;
  }
</style>
